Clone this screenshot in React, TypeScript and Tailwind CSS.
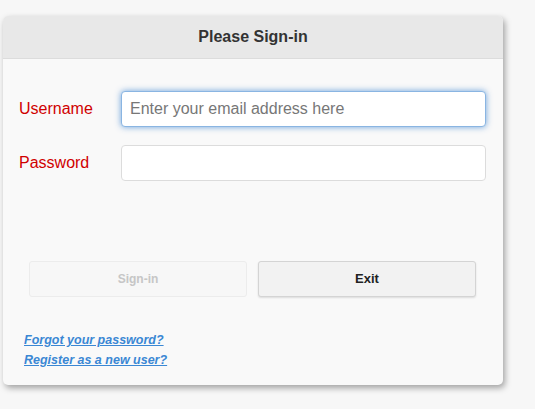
export default function App() {
  return (
    <div className="min-h-[409px] w-full bg-[#f7f7f7] pt-[16px] pl-[3px] font-['Liberation_Sans',Arial,sans-serif]">
      <div className="w-[500px] rounded-[5px] bg-[#f9f9f9] shadow-[2px_3px_6px_rgba(0,0,0,0.35)] overflow-hidden">
        <div className="h-[43px] bg-[#e8e8e8] border-b border-[#dcdcdc] flex items-center justify-center">
          <span className="text-[16px] font-bold text-[#333]">Please Sign-in</span>
        </div>

        <div className="pt-[32px] pl-[16px] pr-[17px]">
          <div className="flex items-center h-[36px]">
            <label className="w-[102px] text-[16px] text-[#d00000]">Username</label>
            <input
              autoFocus
              placeholder="Enter your email address here"
              className="flex-1 h-[36px] rounded-[4px] bg-white border border-[#8ab5e2] shadow-[0_0_6px_rgba(82,146,214,0.85)] px-[8px] text-[16px] text-[#333] placeholder:text-[#777] outline-none"
            />
          </div>
          <div className="flex items-center h-[36px] mt-[18px]">
            <label className="w-[102px] text-[16px] text-[#d00000]">Password</label>
            <input
              type="password"
              className="flex-1 h-[36px] rounded-[4px] bg-white border border-[#dcdcdc] px-[8px] text-[16px] outline-none"
            />
          </div>
        </div>

        <div className="flex gap-[11px] pl-[26px] mt-[80px]">
          <button
            disabled
            className="w-[218px] h-[36px] rounded-[3px] border border-[#ececec] bg-[#f7f7f7] text-[12px] font-bold text-[#c6c6c6]"
          >
            Sign-in
          </button>
          <button className="w-[218px] h-[36px] rounded-[3px] border border-[#d4d4d4] bg-[#f2f2f2] text-[13px] font-bold text-[#222] shadow-[0_1px_2px_rgba(0,0,0,0.12)]">
            Exit
          </button>
        </div>

        <div className="pl-[21px] pt-[35px] pb-[16px] flex flex-col gap-[3px] text-[12.5px] font-bold italic text-[#3a87d4] leading-[17px]">
          <a href="#" className="underline w-fit">Forgot your password?</a>
          <a href="#" className="underline w-fit">Register as a new user?</a>
        </div>
      </div>
    </div>
  );
}
